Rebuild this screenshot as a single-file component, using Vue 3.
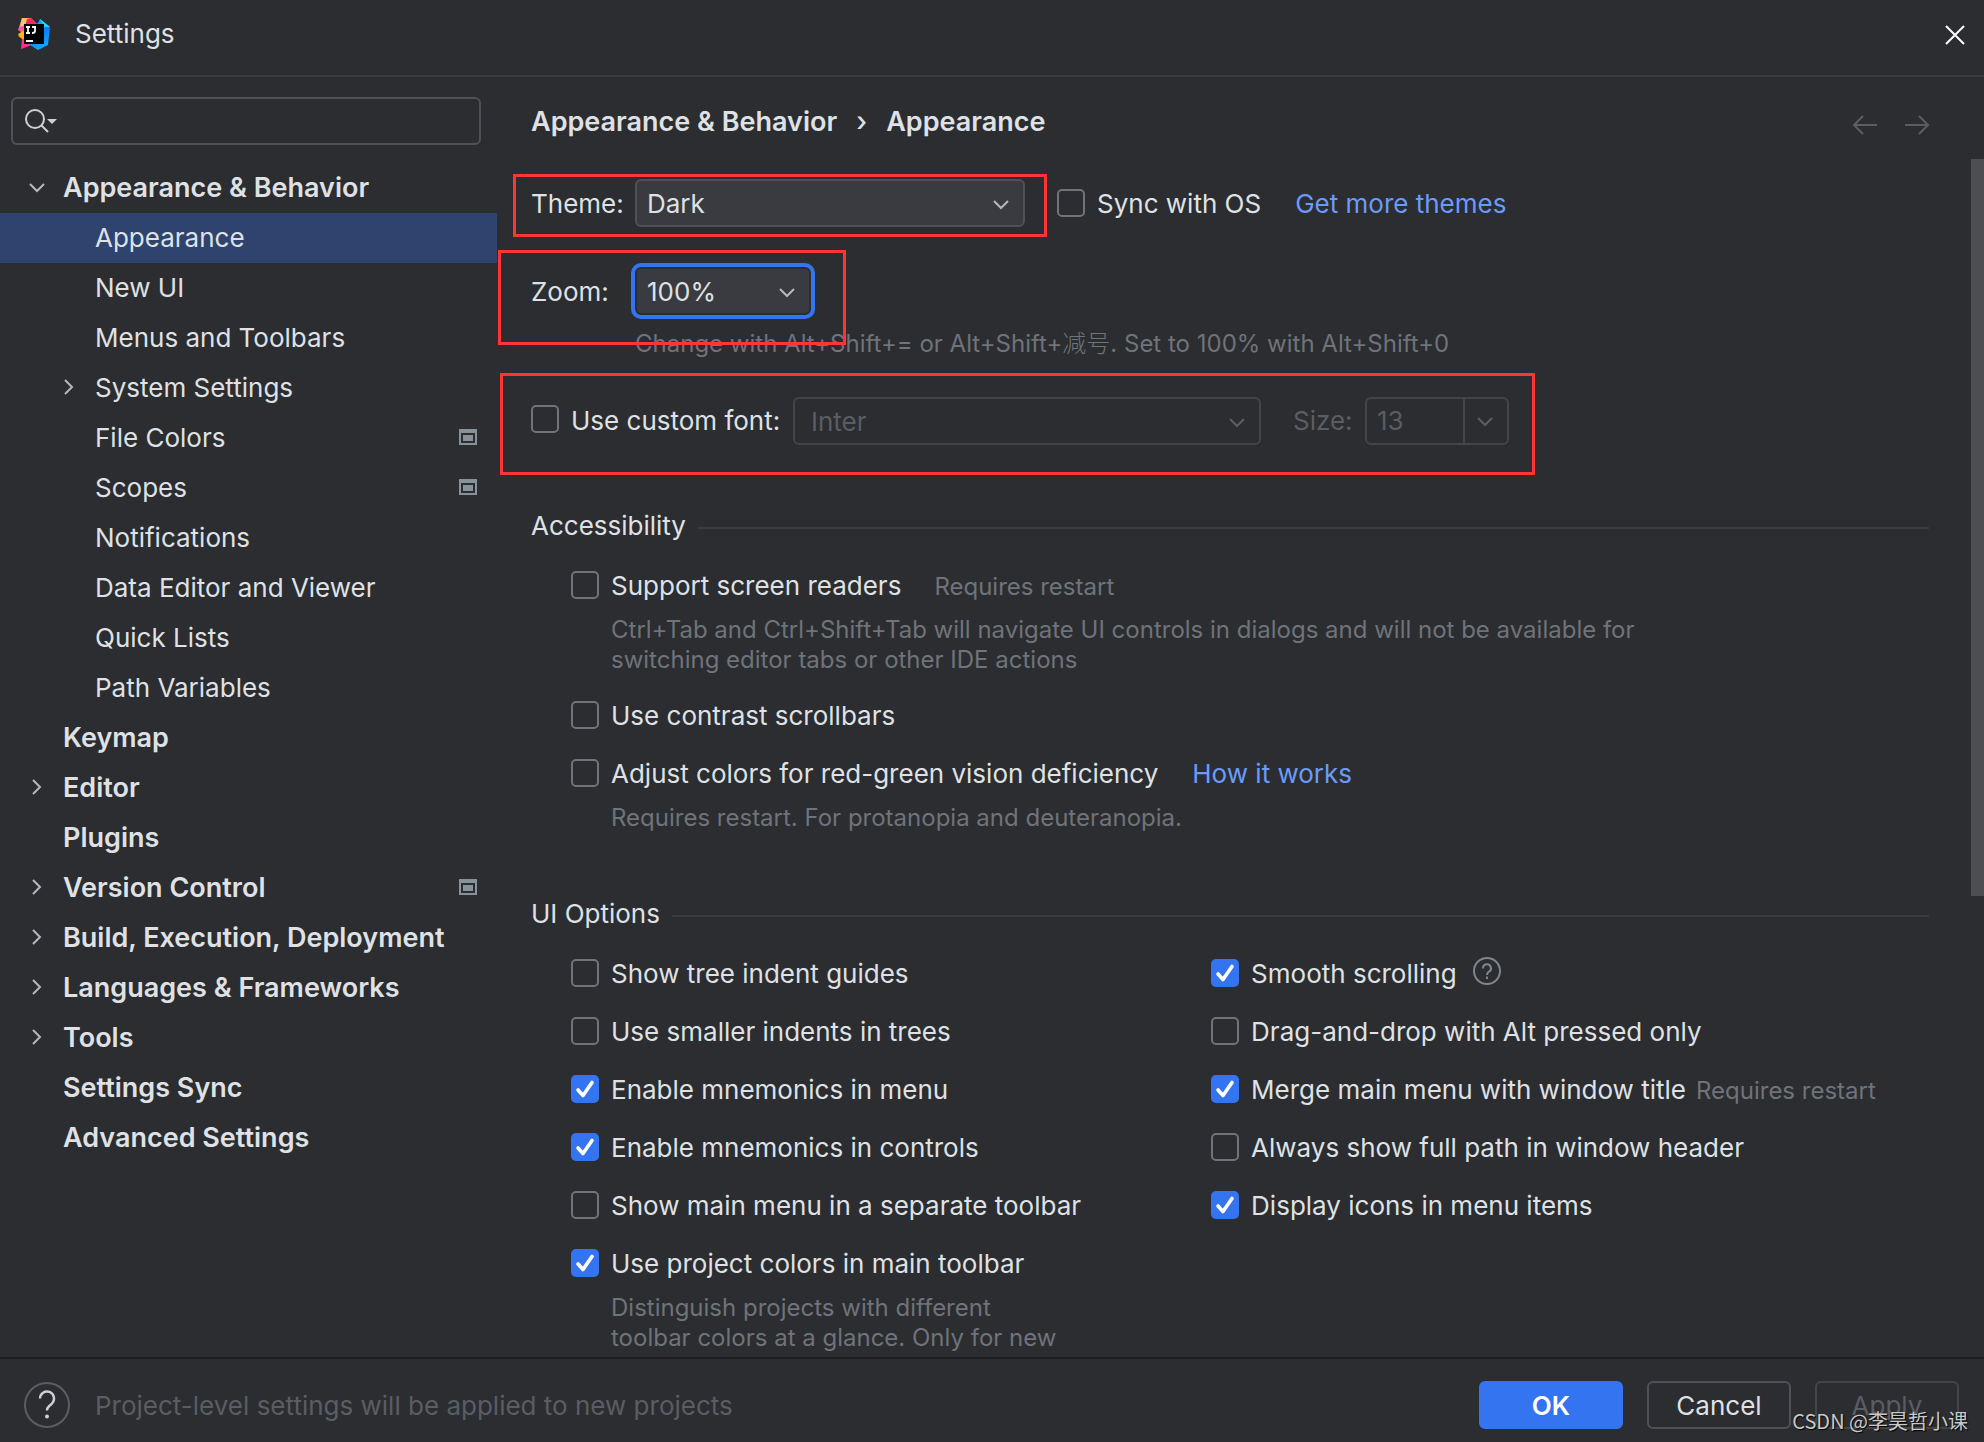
<script setup>
import { ref } from 'vue'

const tree = ref([
  { label: 'Appearance & Behavior', level: 0, arrow: 'down' },
  { label: 'Appearance', level: 1, selected: true },
  { label: 'New UI', level: 1 },
  { label: 'Menus and Toolbars', level: 1 },
  { label: 'System Settings', level: 1, arrow: 'right' },
  { label: 'File Colors', level: 1, project: true },
  { label: 'Scopes', level: 1, project: true },
  { label: 'Notifications', level: 1 },
  { label: 'Data Editor and Viewer', level: 1 },
  { label: 'Quick Lists', level: 1 },
  { label: 'Path Variables', level: 1 },
  { label: 'Keymap', level: 0 },
  { label: 'Editor', level: 0, arrow: 'right' },
  { label: 'Plugins', level: 0 },
  { label: 'Version Control', level: 0, arrow: 'right', project: true },
  { label: 'Build, Execution, Deployment', level: 0, arrow: 'right' },
  { label: 'Languages & Frameworks', level: 0, arrow: 'right' },
  { label: 'Tools', level: 0, arrow: 'right' },
  { label: 'Settings Sync', level: 0 },
  { label: 'Advanced Settings', level: 0 },
])

const accessibility = ref([
  {
    id: 'readers',
    label: 'Support screen readers',
    checked: false,
    note: 'Requires restart',
    hint: 'Ctrl+Tab and Ctrl+Shift+Tab will navigate UI controls in dialogs and will not be available for\nswitching editor tabs or other IDE actions',
  },
  { id: 'contrast', label: 'Use contrast scrollbars', checked: false },
  {
    id: 'vision',
    label: 'Adjust colors for red-green vision deficiency',
    checked: false,
    link: 'How it works',
    hint: 'Requires restart. For protanopia and deuteranopia.',
  },
])

const uiColumns = ref([
  [
    { id: 'guides', label: 'Show tree indent guides', checked: false },
    { id: 'indents', label: 'Use smaller indents in trees', checked: false },
    { id: 'mn-menu', label: 'Enable mnemonics in menu', checked: true },
    { id: 'mn-controls', label: 'Enable mnemonics in controls', checked: true },
    { id: 'separate', label: 'Show main menu in a separate toolbar', checked: false },
    {
      id: 'project-colors',
      label: 'Use project colors in main toolbar',
      checked: true,
      hint: 'Distinguish projects with different\ntoolbar colors at a glance. Only for new',
    },
  ],
  [
    { id: 'smooth', label: 'Smooth scrolling', checked: true, help: true },
    { id: 'dnd', label: 'Drag-and-drop with Alt pressed only', checked: false },
    { id: 'merge', label: 'Merge main menu with window title', checked: true, nearNote: 'Requires restart' },
    { id: 'fullpath', label: 'Always show full path in window header', checked: false },
    { id: 'icons', label: 'Display icons in menu items', checked: true },
  ],
])

const theme = ref('Dark')
const zoom = ref('100%')
const search = ref('')
const syncOs = ref(false)
const customFont = ref(false)
</script>

<template>
  <div class="window">
    <header class="titlebar">
      <svg class="logo" viewBox="0 0 32 32" aria-hidden="true">
        <defs>
          <linearGradient id="lg-warm" x1="0" y1="0" x2="0" y2="1">
            <stop offset="0" stop-color="#fdb54a" />
            <stop offset="0.3" stop-color="#ff45c0" />
            <stop offset="0.52" stop-color="#fb8a1c" />
            <stop offset="0.75" stop-color="#ff318c" />
            <stop offset="1" stop-color="#ff318c" />
          </linearGradient>
          <linearGradient id="lg-cool" x1="0" y1="0" x2="0.3" y2="1">
            <stop offset="0" stop-color="#12c9ff" />
            <stop offset="0.5" stop-color="#087cfa" />
            <stop offset="1" stop-color="#17a3fd" />
          </linearGradient>
        </defs>
        <path d="M4 0 L13 0 L18 5 L16 26 L11 28 L3 31 L4 21 L0 18 L3 14 L0 12 Z" fill="url(#lg-warm)" />
        <path d="M4 0 L10 1 L7 7 L2 9 Z" fill="#fbc56a" />
        <path d="M9 1 L13 0 L18 5 L16 8 L7 8 Z" fill="#fe2857" />
        <path d="M0 16 L6 13 L6 21 L3 20 Z" fill="#fdb60d" />
        <path d="M20 5 L22 1 L32 9 L30 27 L20 32 L12 27 L17 6 Z" fill="url(#lg-cool)" />
        <path d="M22 1 L32 9 L26 9 Z" fill="#21d7fd" />
        <rect x="6" y="6" width="20" height="20" fill="#000" />
        <path d="M8 9h4M10 9v6M8 15h4M14 9h4M17 9v4q0 2-3 2" fill="none" stroke="#fff" stroke-width="1.8" />
        <path d="M8 23h7" stroke="#fff" stroke-width="2" />
      </svg>
      <h1 class="title">Settings</h1>
      <button class="close" type="button" aria-label="Close">
        <svg viewBox="0 0 20 20" aria-hidden="true"><path d="M1 1L19 19M19 1L1 19" /></svg>
      </button>
    </header>

    <div class="body">
      <aside class="sidebar">
        <label class="search">
          <svg viewBox="0 0 34 26" aria-hidden="true">
            <circle cx="11" cy="11" r="9" fill="none" stroke="#ced0d6" stroke-width="2" />
            <path d="M17.500 17.500L24 24" stroke="#ced0d6" stroke-width="2" />
            <path d="M23 11h10l-5 5z" fill="#ced0d6" />
          </svg>
          <input v-model="search" type="text" aria-label="Search settings" />
        </label>
        <ul class="tree">
          <li v-for="item in tree" :key="item.label">
            <button
              type="button"
              class="node"
              :class="{ top: item.level === 0, child: item.level === 1, selected: item.selected }"
            >
              <svg class="twisty" viewBox="0 0 32 32" aria-hidden="true">
                <path v-if="item.arrow === 'down'" d="M9 12L16 19L23 12" />
                <path v-if="item.arrow === 'right'" d="M12 8L19 15L12 22" />
              </svg>
              <span class="node-label">{{ item.label }}</span>
              <svg v-if="item.project" class="project" viewBox="0 0 18 16" aria-hidden="true">
                <path d="M0 0H18V16H0ZM2 4V14H16V4Z" fill-rule="evenodd" />
                <rect x="4" y="6" width="10" height="6" />
              </svg>
            </button>
          </li>
        </ul>
      </aside>

      <main class="main">
        <div class="crumbs">
          <h2>Appearance &amp; Behavior</h2>
          <span class="sep">›</span>
          <h2>Appearance</h2>
          <div class="history">
            <button type="button" aria-label="Back" disabled>
              <svg viewBox="0 0 24 20" aria-hidden="true"><path d="M24 10H1M10 1L1 10L10 19" /></svg>
            </button>
            <button type="button" aria-label="Forward" disabled>
              <svg viewBox="0 0 24 20" aria-hidden="true"><path d="M0 10H23M14 1L23 10L14 19" /></svg>
            </button>
          </div>
        </div>

        <div class="scroll">
          <div class="content">
            <div class="row marked mark-theme">
              <label class="field-label" for="theme">Theme:</label>
              <span class="combo theme">
                <select id="theme" v-model="theme"><option>Dark</option><option>Light</option></select>
                <svg viewBox="0 0 16 10" aria-hidden="true"><path d="M1 1L8 8L15 1" /></svg>
              </span>
              <input id="sync" v-model="syncOs" type="checkbox" class="sync" />
              <label class="box-label" for="sync">Sync with OS</label>
              <a class="link" href="#themes">Get more themes</a>
            </div>

            <div class="row zoom-row marked mark-zoom">
              <label class="field-label" for="zoom">Zoom:</label>
              <span class="combo zoom">
                <select id="zoom" v-model="zoom"><option>100%</option><option>125%</option></select>
                <svg viewBox="0 0 16 10" aria-hidden="true"><path d="M1 1L8 8L15 1" /></svg>
              </span>
            </div>
            <p class="hint zoom-hint">Change with Alt+Shift+= or Alt+Shift+<span class="cjk">减号</span>. Set to 100% with Alt+Shift+0</p>

            <div class="row font-row marked mark-font">
              <input id="custom" v-model="customFont" type="checkbox" />
              <label class="box-label" for="custom">Use custom font:</label>
              <span class="combo family off">
                <select aria-label="Font family" disabled><option>Inter</option></select>
                <svg viewBox="0 0 16 10" aria-hidden="true"><path d="M1 1L8 8L15 1" /></svg>
              </span>
              <label class="size-label" for="size">Size:</label>
              <span class="size-box">
                <input id="size" type="text" value="13" disabled />
                <button type="button" aria-label="Choose size" disabled>
                  <svg viewBox="0 0 16 10" aria-hidden="true"><path d="M1 1L8 8L15 1" /></svg>
                </button>
              </span>
            </div>

            <section class="group first">
              <h3><span>Accessibility</span></h3>
              <div class="options">
                <div v-for="o in accessibility" :key="o.id">
                  <div class="option">
                    <input :id="o.id" v-model="o.checked" type="checkbox" />
                    <label class="box-label" :for="o.id">{{ o.label }}</label>
                    <span v-if="o.note" class="note">{{ o.note }}</span>
                    <a v-if="o.link" class="link" href="#how">{{ o.link }}</a>
                  </div>
                  <p v-if="o.hint" class="hint">{{ o.hint }}</p>
                </div>
              </div>
            </section>

            <section class="group">
              <h3><span>UI Options</span></h3>
              <div class="columns">
                <div v-for="(col, i) in uiColumns" :key="i" class="options">
                  <div v-for="o in col" :key="o.id">
                    <div class="option">
                      <input :id="o.id" v-model="o.checked" type="checkbox" />
                      <label class="box-label" :for="o.id">{{ o.label }}</label>
                      <span v-if="o.nearNote" class="note near">{{ o.nearNote }}</span>
                      <svg v-if="o.help" class="info" viewBox="0 0 28 28" aria-hidden="true">
                        <circle cx="14" cy="14" r="13" />
                        <path d="M10 11.500a4 4 0 1 1 6 3.200q-2 1.200-2 3.300" />
                        <path d="M14 19.500v2.400" />
                      </svg>
                    </div>
                    <p v-if="o.hint" class="hint">{{ o.hint }}</p>
                  </div>
                </div>
              </div>
            </section>
          </div>
          <div class="scrollbar" aria-hidden="true"><div class="thumb"></div><div class="rest"></div></div>
        </div>
      </main>
    </div>

    <footer class="footer">
      <button class="help" type="button" aria-label="Help">
        <svg viewBox="0 0 46 46" aria-hidden="true">
          <circle cx="23" cy="23" r="22" fill="none" stroke="#5a5d63" stroke-width="2" />
          <path d="M16 16.500a7 7 0 1 1 12.200 4.700q-1.200 1.300-3 2.800q-2.200 2-2.200 4.500" fill="none" stroke="#ced0d6" stroke-width="2.400" />
          <circle cx="23" cy="34.500" r="2" fill="#ced0d6" />
        </svg>
      </button>
      <p class="status">Project-level settings will be applied to new projects</p>
      <div class="actions">
        <button class="btn primary" type="button">OK</button>
        <button class="btn" type="button">Cancel</button>
        <button class="btn" type="button" disabled>Apply</button>
      </div>
      <span class="watermark">CSDN @李昊哲小课</span>
    </footer>
  </div>
</template>

<style>
body {
  background: #2b2d30;
}
</style>

<style scoped>
.window {
  display: flex;
  flex-direction: column;
  min-height: 100vh;
  background: #2b2d30;
  color: #dfe1e5;
  font-family: Inter, "Noto Sans CJK SC", sans-serif;
  font-optical-sizing: none;
  font-size: 26px;
  line-height: 32px;
}
.window *,
.window *::after {
  box-sizing: border-box;
}
h1, h2, h3, p, ul {
  margin: 0;
  padding: 0;
  font-size: inherit;
  font-weight: 400;
}
button, input, select {
  margin: 0;
  padding: 0;
  border: 0;
  background: none;
  color: inherit;
  font: inherit;
}
svg {
  display: block;
  flex: none;
}

.titlebar {
  display: flex;
  align-items: center;
  height: 77px;
  padding: 0 19px 8px 18px;
  border-bottom: 2px solid #393b40;
}
.logo {
  width: 32px;
  height: 32px;
}
.title {
  flex: 1;
  padding-left: 25px;
}
.close {
  padding-top: 2px;
}
.close svg {
  width: 20px;
  height: 20px;
  fill: none;
  stroke: #fff;
  stroke-width: 2;
}

.body {
  display: flex;
  flex: 1;
}
.sidebar {
  flex: none;
  width: 497px;
  padding-top: 20px;
}
.search {
  display: flex;
  align-items: center;
  height: 48px;
  margin: 0 16px 18px 11px;
  padding-left: 11px;
  border: 2px solid #4e5157;
  border-radius: 6px;
}
.search svg {
  width: 34px;
  height: 26px;
}
.search input {
  flex: 1;
  min-width: 0;
  outline: none;
}
.tree {
  list-style: none;
}
.node {
  display: flex;
  align-items: center;
  width: 100%;
  height: 50px;
  padding-right: 20px;
  text-align: left;
}
.top {
  padding-left: 21px;
  font-size: 27px;
  font-weight: 600;
}
.child {
  padding-left: 53px;
}
.selected {
  background: #2e436e;
}
.twisty {
  width: 32px;
  height: 32px;
  margin-right: 10px;
  fill: none;
  stroke: #b4b8bf;
  stroke-width: 2;
}
.node-label {
  flex: 1;
  white-space: nowrap;
}
.project {
  width: 18px;
  height: 16px;
  margin-bottom: 2px;
  fill: #87939a;
}

.main {
  display: flex;
  flex: 1;
  flex-direction: column;
  min-width: 0;
}
.crumbs {
  display: flex;
  align-items: center;
  height: 82px;
  padding: 8px 55px 0 34px;
}
.crumbs h2, .sep {
  font-size: 27px;
  font-weight: 600;
}
.sep {
  width: 49px;
  font-weight: 500;
  text-align: center;
}
.history {
  display: flex;
  gap: 28px;
  margin-left: auto;
  padding-top: 6px;
}
.history svg {
  width: 24px;
  height: 20px;
  fill: none;
  stroke: #5a5d63;
  stroke-width: 2;
}
.scroll {
  display: flex;
  flex: 1;
}
.content {
  flex: 1;
  min-width: 0;
  padding: 20px 42px 6px 34px;
}
.scrollbar {
  display: flex;
  flex-direction: column;
  width: 13px;
}
.thumb {
  flex: 8;
  background: #4d4e51;
}
.rest {
  flex: 5;
}

.row {
  display: flex;
  align-items: center;
  height: 48px;
}
.field-label {
  width: 104px;
  padding-top: 2px;
}
.zoom-row, .font-row {
  margin-top: 40px;
}
.combo {
  position: relative;
  display: block;
}
.combo select {
  display: block;
  width: 100%;
  height: 48px;
  padding: 2px 0 0 10px;
  border: 2px solid #4e5157;
  border-radius: 6px;
  background: #393b40;
  appearance: none;
  opacity: 1;
}
.combo svg {
  position: absolute;
  top: 21px;
  right: 16px;
  pointer-events: none;
}
.combo svg, .size-box svg {
  width: 16px;
  height: 10px;
  fill: none;
  stroke: #b4b8bf;
  stroke-width: 2;
}
.theme {
  width: 390px;
}
.zoom {
  width: 176px;
}
.zoom select {
  border-color: #2b2d30;
  box-shadow: 0 0 0 4px #3574f0;
}
.family {
  width: 468px;
}
.family select {
  padding-left: 16px;
}
.off select {
  border-color: #43454a;
  background: none;
  color: #5a5d63;
}
.off svg, .size-box svg {
  stroke: #5a5d63;
}
.size-label {
  width: 104px;
  padding-left: 32px;
  color: #5a5d63;
}
.size-box {
  display: flex;
  width: 144px;
  height: 48px;
  border: 2px solid #43454a;
  border-radius: 6px;
}
.size-box input {
  flex: 1;
  min-width: 0;
  padding-left: 10px;
  color: #5a5d63;
}
.size-box button {
  display: flex;
  align-items: center;
  justify-content: center;
  width: 44px;
  padding: 2px 2px 0 0;
  border-left: 2px solid #43454a;
}

input[type="checkbox"] {
  flex: none;
  width: 28px;
  height: 28px;
  border: 2px solid #6f737a;
  border-radius: 5px;
  appearance: none;
}
input[type="checkbox"]:checked {
  border: 0;
  background: #3574f0 url("data:image/svg+xml,%3Csvg xmlns='http://www.w3.org/2000/svg' viewBox='0 0 28 28'%3E%3Cpath d='M7 15L12 20.500L21 7.500' fill='none' stroke='%23fff' stroke-width='3.600' stroke-linecap='round' stroke-linejoin='round'/%3E%3C/svg%3E");
}
.sync {
  margin-left: 32px;
}
.box-label {
  padding: 2px 0 0 12px;
  white-space: nowrap;
}
.font-row > input {
  margin-bottom: 4px;
}
.font-row .box-label {
  width: 234px;
  padding-top: 0;
}
.link {
  margin-left: 34px;
  padding-top: 2px;
  color: #6b9bfa;
  text-decoration: none;
  white-space: nowrap;
}
.hint, .note {
  color: #6f737a;
  font-size: 24px;
  line-height: 30px;
}
.hint {
  margin: 14px 0 -2px;
  padding-left: 40px;
  white-space: pre;
}
.zoom-hint {
  padding-left: 104px;
}
.cjk {
  font-family: "Noto Sans CJK SC", sans-serif;
  font-weight: 300;
  line-height: 0;
}
.note {
  margin-left: 33px;
  padding-top: 4px;
}
.near {
  margin-left: 10px;
}

.group {
  margin-top: 66px;
}
.first {
  margin-top: 64px;
}
h3 {
  display: flex;
  align-items: center;
  height: 32px;
}
h3 span {
  padding-top: 2px;
}
h3::after {
  flex: 1;
  height: 2px;
  margin: 6px 0 0 12px;
  background: #393b40;
  content: "";
}
.options {
  display: flex;
  flex-direction: column;
  gap: 26px;
}
.first .options, .columns {
  padding: 28px 0 0 40px;
}
.columns {
  display: grid;
  grid-template-columns: 8fr 9fr;
  column-gap: 2px;
}
.option {
  display: flex;
  align-items: center;
  height: 32px;
}
.info {
  width: 28px;
  height: 28px;
  margin: 0 0 4px 16px;
  fill: none;
  stroke: #7f858c;
  stroke-width: 2;
}

/* red highlight frames drawn over the form rows */
.marked {
  position: relative;
}
.marked::after {
  position: absolute;
  border: 3px solid #ff3535;
  pointer-events: none;
  content: "";
}
.mark-theme::after {
  top: -5px;
  left: -18px;
  width: 534px;
  height: 63px;
}
.mark-zoom::after {
  top: -17px;
  left: -33px;
  width: 348px;
  height: 95px;
}
.mark-font::after {
  top: -24px;
  left: -31px;
  width: 1035px;
  height: 102px;
}

.footer {
  position: relative;
  display: flex;
  align-items: center;
  height: 85px;
  padding: 8px 25px 0 24px;
  border-top: 2px solid #1e1f22;
}
.help svg {
  width: 46px;
  height: 46px;
}
.status {
  flex: 1;
  padding: 2px 0 0 25px;
  color: #5a5d63;
}
.actions {
  display: flex;
  gap: 24px;
}
.btn {
  width: 144px;
  height: 48px;
  padding-top: 2px;
  border: 2px solid #4e5157;
  border-radius: 6px;
}
.btn:disabled {
  border-color: #43454a;
  color: #5a5d63;
}
.primary {
  border-color: #3574f0;
  background: #3574f0;
  color: #fff;
  font-weight: 600;
}
.watermark {
  position: absolute;
  right: 16px;
  bottom: 6px;
  color: #c8c9ca;
  font-family: "Noto Sans CJK SC", sans-serif;
  font-size: 20px;
  line-height: 30px;
  text-shadow: 1px 1px 1px #000;
}
</style>
